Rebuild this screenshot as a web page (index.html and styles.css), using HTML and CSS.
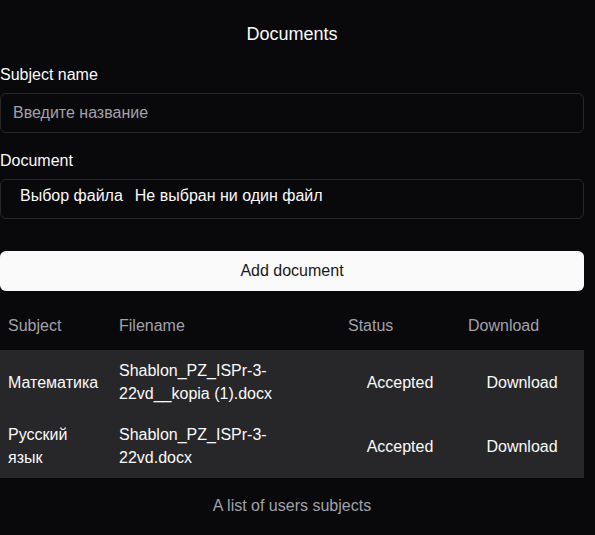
FILE: index.html
```html
<!DOCTYPE html>
<html lang="ru">
<head>
<meta charset="utf-8">
<title>Documents</title>
<link rel="stylesheet" href="styles.css">
</head>
<body>
<main class="page">
  <h1 class="title">Documents</h1>
  <form class="form">
    <div class="field">
      <label class="label" for="subject">Subject name</label>
      <input class="input" id="subject" type="text" placeholder="Введите название">
    </div>
    <div class="field">
      <label class="label">Document</label>
      <div class="input file-input">
        <span class="file-btn">Выбор файла</span>
        <span class="file-name">Не выбран ни один файл</span>
      </div>
    </div>
    <button class="btn" type="button">Add document</button>
  </form>
  <table class="table">
    <colgroup>
      <col class="c-subject">
      <col class="c-file">
      <col class="c-status">
      <col class="c-download">
    </colgroup>
    <caption class="caption">A list of users subjects</caption>
    <thead>
      <tr>
        <th>Subject</th>
        <th>Filename</th>
        <th>Status</th>
        <th>Download</th>
      </tr>
    </thead>
    <tbody>
      <tr>
        <td>Математика</td>
        <td>Shablon_PZ_ISPr-3-22vd__kopia (1).docx</td>
        <td class="center">Accepted</td>
        <td class="center">Download</td>
      </tr>
      <tr>
        <td>Русский язык</td>
        <td>Shablon_PZ_ISPr-3-22vd.docx</td>
        <td class="center">Accepted</td>
        <td class="center">Download</td>
      </tr>
    </tbody>
  </table>
</main>
</body>
</html>
```
FILE: styles.css
```css
html, body {
  margin: 0;
  padding: 0;
  background: #09090b;
  color: #fafafa;
  font-family: "Liberation Sans", Arial, sans-serif;
  font-size: 16px;
  line-height: 24px;
}

.page {
  width: 584px;
  padding-top: 20px;
}

.title {
  margin: 0 0 15px;
  font-size: 18px;
  line-height: 28px;
  font-weight: normal;
  text-align: center;
  color: #fafafa;
}

.form {
  display: flex;
  flex-direction: column;
}

.field {
  display: flex;
  flex-direction: column;
  margin-bottom: 16px;
}

.label {
  display: block;
  line-height: 24px;
  margin-bottom: 6px;
  color: #fafafa;
}

.input {
  box-sizing: border-box;
  width: 100%;
  height: 40px;
  margin: 0;
  padding: 0 12px;
  border: 1px solid #27272a;
  border-radius: 6px;
  background: transparent;
  color: #fafafa;
  font: inherit;
  outline: none;
}

.input::placeholder {
  color: #a1a1aa;
}

.file-input {
  display: flex;
  align-items: center;
  padding: 0 12px 6px 19px;
}

.file-btn {
  margin-right: 12px;
}

.btn {
  margin-top: 16px;
  height: 40px;
  border: 0;
  border-radius: 6px;
  background: #fafafa;
  color: #18181b;
  font: inherit;
  line-height: 24px;
  cursor: pointer;
}

.table {
  margin-top: 11px;
  width: 584px;
  table-layout: fixed;
  border-collapse: collapse;
  border-spacing: 0;
}

.c-subject { width: 111px; }
.c-file { width: 229px; }
.c-status { width: 120px; }
.c-download { width: 124px; }

.table th {
  height: 48px;
  padding: 0 8px;
  text-align: left;
  font-weight: normal;
  color: #a1a1aa;
  vertical-align: middle;
}

.table tbody tr {
  background: #27272a;
}

.table td {
  padding: 9px 8px;
  line-height: 23px;
  vertical-align: middle;
  color: #fafafa;
}

.table td.center {
  text-align: center;
}

.caption {
  caption-side: bottom;
  padding-top: 16px;
  text-align: center;
  color: #a1a1aa;
}
```
